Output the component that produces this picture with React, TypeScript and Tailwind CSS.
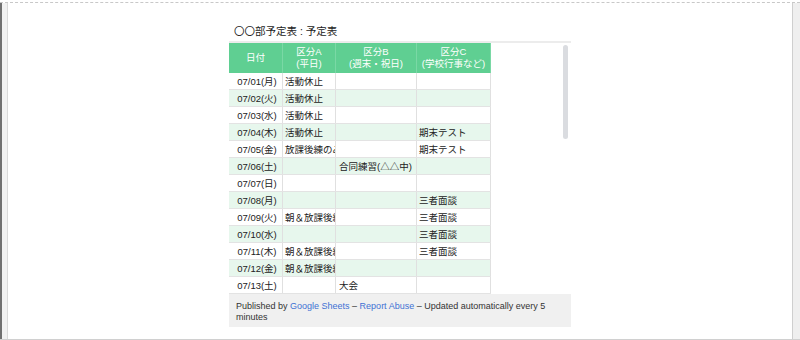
import React from "react";

const rows: string[][] = [
  ["07/01(月)", "活動休止", "", ""],
  ["07/02(火)", "活動休止", "", ""],
  ["07/03(水)", "活動休止", "", ""],
  ["07/04(木)", "活動休止", "", "期末テスト"],
  ["07/05(金)", "放課後練のみ", "", "期末テスト"],
  ["07/06(土)", "", "合同練習(△△中)", ""],
  ["07/07(日)", "", "", ""],
  ["07/08(月)", "", "", "三者面談"],
  ["07/09(火)", "朝＆放課後練習", "", "三者面談"],
  ["07/10(水)", "", "", "三者面談"],
  ["07/11(木)", "朝＆放課後練習", "", "三者面談"],
  ["07/12(金)", "朝＆放課後練習", "", ""],
  ["07/13(土)", "", "大会", ""],
];

const font = "font-['Liberation_Sans','Noto_Sans_CJK_JP',sans-serif]";

export default function App() {
  return (
    <div className={`w-[800px] h-[340px] bg-white flex flex-col ${font}`}>
      <div className="h-[2px]" />
      <div className="flex-1 flex border-t border-dashed border-[#c8c8c8] min-h-0">
        <div className="w-[8px] border-l-2 border-l-[#707070] bg-[#f1f1f1] border-r border-r-[#d9d9d9]" />
        <div className="flex-1 flex justify-center">
          <div className="w-[342px] pt-[19px] flex flex-col">
            <div className="h-[19px] pl-[5px] leading-[18px] text-[10.5px] text-[#222]">〇〇部予定表 : 予定表</div>
            <div className="h-[2px] bg-[#ececec]" />
            <div className="relative">
              <div className="w-[262px] text-[9.5px] text-[#222]">
                <div className="grid grid-cols-[54px_53px_81px_74px] h-[30px] bg-[#5fcf92] text-white leading-[12.5px] text-center">
                  <div className="flex items-center justify-center border-r border-[#7ad8a5]">日付</div>
                  <div className="flex flex-col items-center justify-center border-r border-[#7ad8a5]">
                    <span>区分A</span>
                    <span>(平日)</span>
                  </div>
                  <div className="flex flex-col items-center justify-center border-r border-[#7ad8a5]">
                    <span>区分B</span>
                    <span>(週末・祝日)</span>
                  </div>
                  <div className="flex flex-col items-center justify-center border-r border-[#7ad8a5]">
                    <span>区分C</span>
                    <span>(学校行事など)</span>
                  </div>
                </div>
                {rows.map((r, i) => (
                  <div
                    key={i}
                    className={`grid grid-cols-[54px_53px_81px_74px] h-[17px] leading-[17px] border-b border-[#e3e3e3] ${
                      i % 2 === 1 ? "bg-[#e7f7ed]" : "bg-white"
                    }`}
                  >
                    <div className="text-center border-r border-[#e0e0e0] whitespace-nowrap overflow-hidden pl-[3px]">{r[0]}</div>
                    <div className="pl-[2px] border-r border-[#e0e0e0] whitespace-nowrap overflow-hidden">{r[1]}</div>
                    <div className="pl-[3px] border-r border-[#e0e0e0] whitespace-nowrap overflow-hidden">{r[2]}</div>
                    <div className="pl-[2px] border-r border-[#e0e0e0] whitespace-nowrap overflow-hidden">{r[3]}</div>
                  </div>
                ))}
              </div>
              <div className="absolute left-[334px] top-[2px] w-[5px] h-[94px] rounded-full bg-[#dadce0]" />
            </div>
            <div className="h-[33px] bg-[#f0f0f0] px-[7px] pt-[7px] text-[9px] leading-[10.5px] text-[#333]">
              Published by <span className="text-[#3f72d4]">Google Sheets</span> – <span className="text-[#3f72d4]">Report Abuse</span> – Updated automatically every 5 minutes
            </div>
          </div>
        </div>
        <div className="w-[8px] bg-[#efefef] border-l border-[#cfcfcf]" />
      </div>
      <div className="h-[1px] bg-[#d0d0d0]" />
    </div>
  );
}
